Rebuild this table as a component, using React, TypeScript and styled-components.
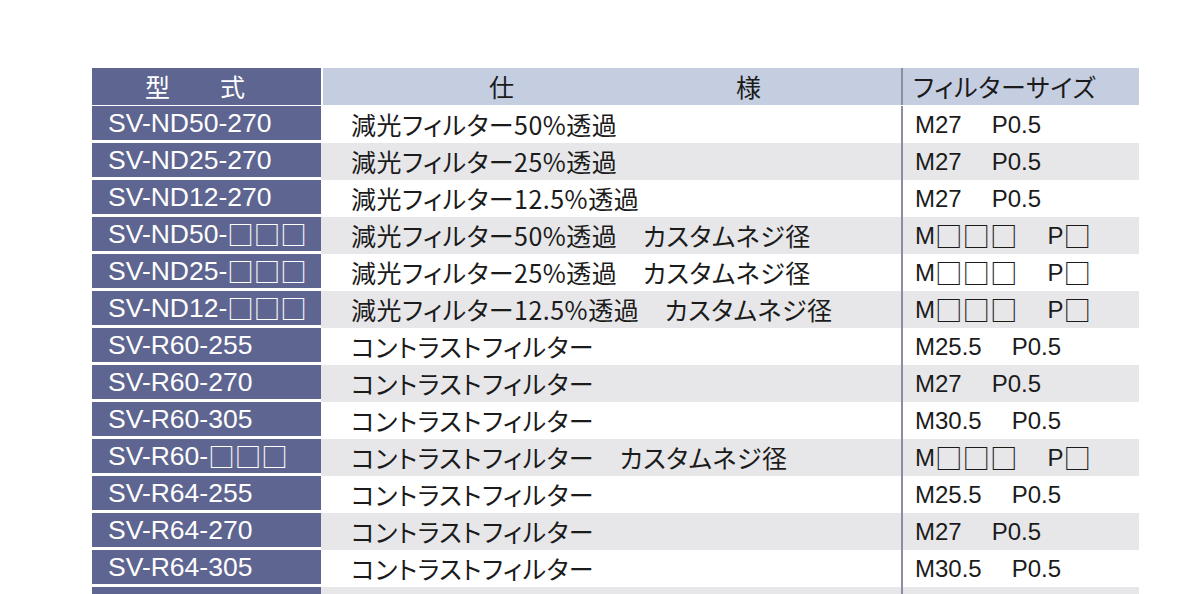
import React from 'react';
import styled, { createGlobalStyle } from 'styled-components';

const GlobalStyle = createGlobalStyle`
  html, body {
    margin: 0;
    padding: 0;
    background: #fff;
    overflow: hidden;
  }
`;

const navy = '#5e6590';
const pale = '#c5cee0';
const stripe = '#e7e7e9';
const rule = '#8b8da0';
const ink = '#1b1b1b';

const latin = `"Liberation Sans", Arial, "Noto Sans CJK JP", sans-serif`;
const gothic = `"Noto Sans CJK JP", "Noto Sans CJK SC", sans-serif`;

const Page = styled.div`
  padding: 68px 0 0 92px;
`;

const Table = styled.div`
  width: 1047px;
  display: flex;
  flex-direction: column;
`;

const HeadRow = styled.div`
  display: grid;
  grid-template-columns: 229px 580px 238px;
  height: 37px;
  margin-bottom: 1px;
`;

const ModelHead = styled.div`
  background: ${navy};
  color: #fff;
  font-family: ${gothic};
  font-size: 25px;
  line-height: 1;
  display: flex;
  align-items: center;
  gap: 50px;
  padding-left: 53px;
`;

const SpecHead = styled.div`
  background: ${pale};
  margin-left: 2px;
  color: ${ink};
  font-family: ${gothic};
  font-size: 25px;
  line-height: 1;
  display: flex;
  align-items: center;
  gap: 222px;
  padding-left: 166px;
`;

const SizeHead = styled.div`
  background: ${pale};
  border-left: 2px solid ${rule};
  color: ${ink};
  font-family: ${gothic};
  font-size: 25px;
  font-feature-settings: 'palt';
  letter-spacing: 0.8px;
  line-height: 1;
  display: flex;
  align-items: center;
  padding-left: 10px;
`;

const Row = styled.div<{ $shaded: boolean }>`
  display: grid;
  grid-template-columns: 229px 580px 238px;
  height: 37px;
  background: ${(p) => (p.$shaded ? stripe : '#fff')};
`;

const Model = styled.div`
  box-sizing: border-box;
  background: ${navy};
  border-bottom: 3px solid #fff;
  color: #fff;
  font-family: ${latin};
  font-size: 26.5px;
  line-height: 1;
  display: flex;
  align-items: center;
  padding-left: 16px;
  white-space: nowrap;
`;

const Spec = styled.div`
  color: ${ink};
  font-family: ${gothic};
  font-size: 25px;
  font-feature-settings: 'palt';
  letter-spacing: 0.5px;
  line-height: 1;
  display: flex;
  align-items: center;
  padding-left: 30px;
  white-space: pre;
`;

const Size = styled.div`
  border-left: 2px solid ${rule};
  color: ${ink};
  font-family: ${latin};
  font-size: 24px;
  line-height: 1;
  display: flex;
  align-items: center;
  gap: 30px;
  padding-left: 12px;
  white-space: nowrap;
`;

const Part = styled.span`
  display: inline-flex;
  align-items: center;
`;

const Blank = styled.span<{ $size?: number }>`
  font-family: ${gothic};
  font-size: ${(p) => p.$size ?? 26.5}px;
  line-height: 1;
`;

const withBlanks = (text: string, size?: number) =>
  text.split(/(□+)/).map((chunk, i) =>
    chunk.startsWith('□') ? (
      <Blank key={i} $size={size}>
        {chunk}
      </Blank>
    ) : (
      <React.Fragment key={i}>{chunk}</React.Fragment>
    ),
  );

interface Item {
  model: string;
  spec: string;
  dia: string;
  pitch: string;
}

const ND = '減光フィルター';
const CT = 'コントラストフィルター';
const CUSTOM = '　カスタムネジ径';

const items: Item[] = [
  { model: 'SV-ND50-270', spec: `${ND}50%透過`, dia: 'M27', pitch: 'P0.5' },
  { model: 'SV-ND25-270', spec: `${ND}25%透過`, dia: 'M27', pitch: 'P0.5' },
  { model: 'SV-ND12-270', spec: `${ND}12.5%透過`, dia: 'M27', pitch: 'P0.5' },
  { model: 'SV-ND50-□□□', spec: `${ND}50%透過${CUSTOM}`, dia: 'M□□□', pitch: 'P□' },
  { model: 'SV-ND25-□□□', spec: `${ND}25%透過${CUSTOM}`, dia: 'M□□□', pitch: 'P□' },
  { model: 'SV-ND12-□□□', spec: `${ND}12.5%透過${CUSTOM}`, dia: 'M□□□', pitch: 'P□' },
  { model: 'SV-R60-255', spec: CT, dia: 'M25.5', pitch: 'P0.5' },
  { model: 'SV-R60-270', spec: CT, dia: 'M27', pitch: 'P0.5' },
  { model: 'SV-R60-305', spec: CT, dia: 'M30.5', pitch: 'P0.5' },
  { model: 'SV-R60-□□□', spec: `${CT}${CUSTOM}`, dia: 'M□□□', pitch: 'P□' },
  { model: 'SV-R64-255', spec: CT, dia: 'M25.5', pitch: 'P0.5' },
  { model: 'SV-R64-270', spec: CT, dia: 'M27', pitch: 'P0.5' },
  { model: 'SV-R64-305', spec: CT, dia: 'M30.5', pitch: 'P0.5' },
  { model: 'SV-R64-□□□', spec: `${CT}${CUSTOM}`, dia: 'M□□□', pitch: 'P□' },
];

export default function App() {
  return (
    <>
      <GlobalStyle />
      <Page>
        <Table>
          <HeadRow>
            <ModelHead>
              <span>型</span>
              <span>式</span>
            </ModelHead>
            <SpecHead>
              <span>仕</span>
              <span>様</span>
            </SpecHead>
            <SizeHead>フィルターサイズ</SizeHead>
          </HeadRow>
          {items.map((it, i) => (
            <Row key={it.model} $shaded={i % 2 === 1}>
              <Model>{withBlanks(it.model)}</Model>
              <Spec>{it.spec}</Spec>
              <Size>
                <Part>{withBlanks(it.dia, 27.5)}</Part>
                <Part>{withBlanks(it.pitch, 27.5)}</Part>
              </Size>
            </Row>
          ))}
        </Table>
      </Page>
    </>
  );
}
